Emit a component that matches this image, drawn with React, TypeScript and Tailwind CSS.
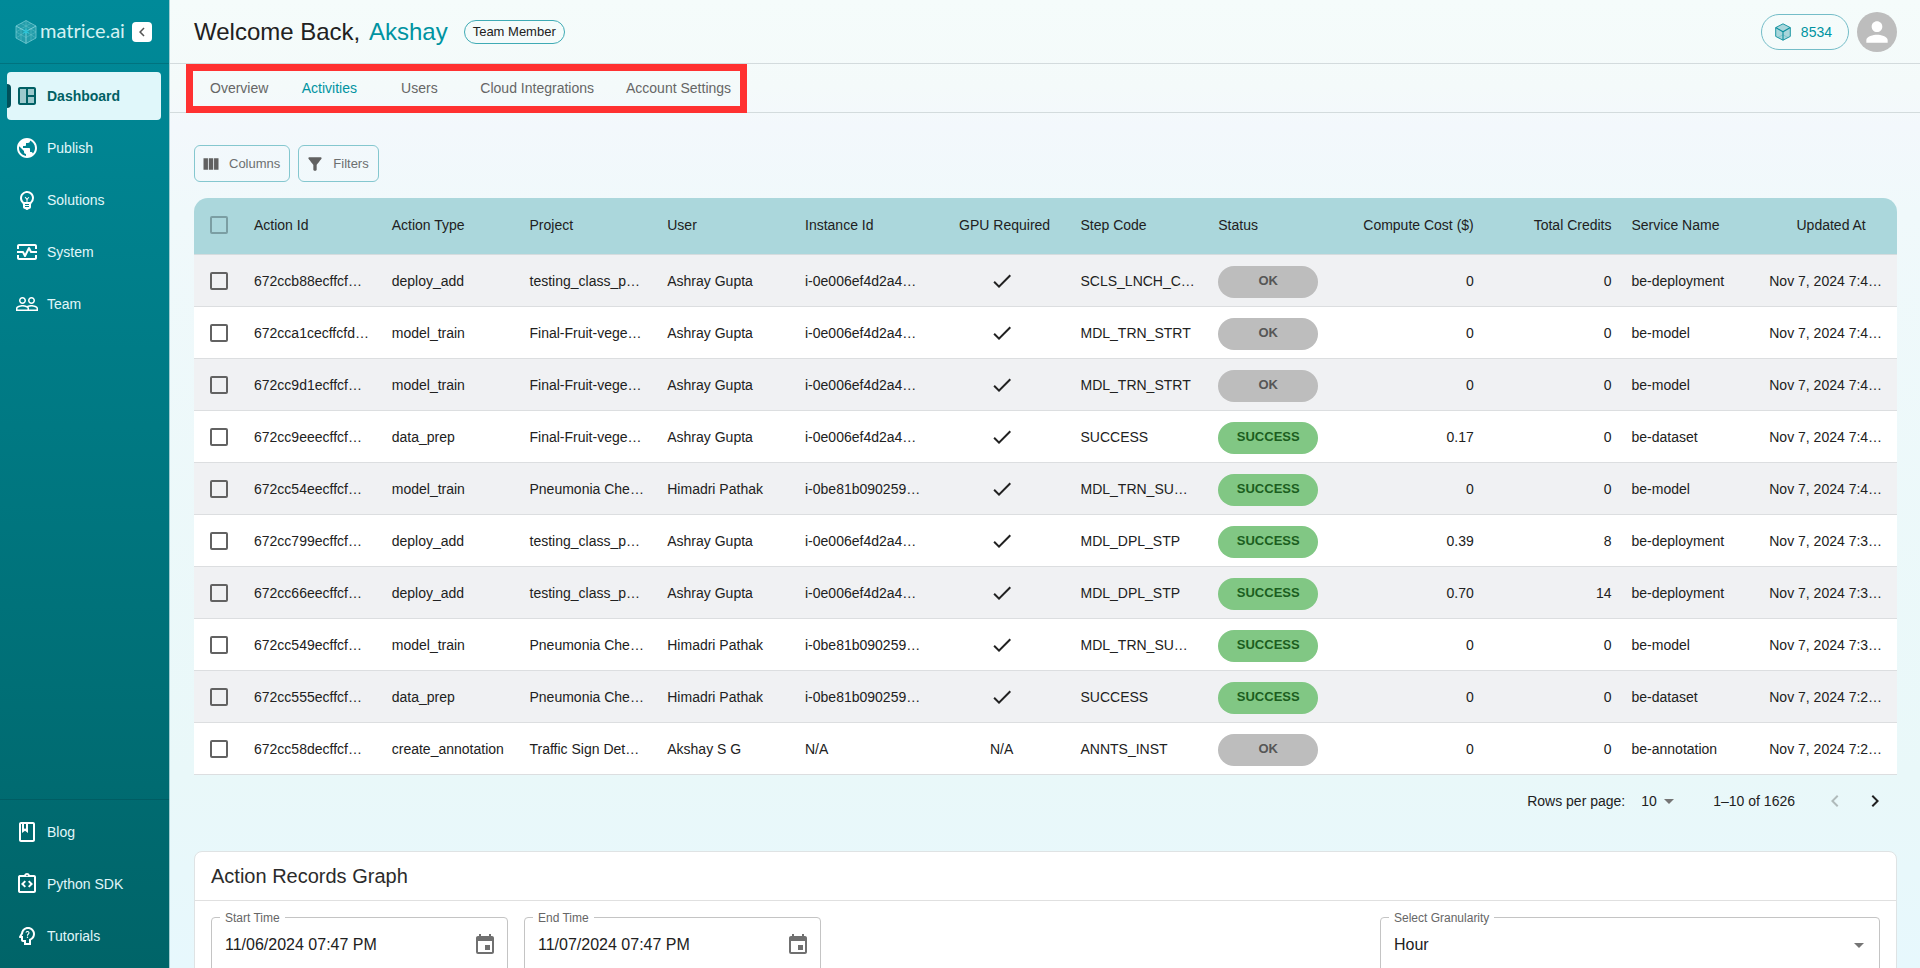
import React from 'react';
import {
  MdArrowDropDown,
  MdCheck,
  MdChevronLeft,
  MdChevronRight,
  MdEvent,
  MdFilterAlt,
  MdOutlineClass,
  MdOutlineEmojiObjects,
  MdOutlineIntegrationInstructions,
  MdOutlineMonitorHeart,
  MdOutlinePsychologyAlt,
  MdPeopleOutline,
  MdPerson,
  MdPublic,
  MdViewColumn,
} from 'react-icons/md';

type Status = 'OK' | 'SUCCESS';

interface ActionRecord {
  id: string;
  type: string;
  project: string;
  user: string;
  instance: string;
  gpu: boolean;
  step: string;
  status: Status;
  cost: string;
  credits: string;
  service: string;
  updated: string;
}

interface NavItem {
  label: string;
  icon: React.ReactNode;
  active?: boolean;
}

const records: ActionRecord[] = [
  { id: '672ccb88ecffcf…', type: 'deploy_add', project: 'testing_class_p…', user: 'Ashray Gupta', instance: 'i-0e006ef4d2a4…', gpu: true, step: 'SCLS_LNCH_C…', status: 'OK', cost: '0', credits: '0', service: 'be-deployment', updated: 'Nov 7, 2024 7:4…' },
  { id: '672cca1cecffcfd…', type: 'model_train', project: 'Final-Fruit-vege…', user: 'Ashray Gupta', instance: 'i-0e006ef4d2a4…', gpu: true, step: 'MDL_TRN_STRT', status: 'OK', cost: '0', credits: '0', service: 'be-model', updated: 'Nov 7, 2024 7:4…' },
  { id: '672cc9d1ecffcf…', type: 'model_train', project: 'Final-Fruit-vege…', user: 'Ashray Gupta', instance: 'i-0e006ef4d2a4…', gpu: true, step: 'MDL_TRN_STRT', status: 'OK', cost: '0', credits: '0', service: 'be-model', updated: 'Nov 7, 2024 7:4…' },
  { id: '672cc9eeecffcf…', type: 'data_prep', project: 'Final-Fruit-vege…', user: 'Ashray Gupta', instance: 'i-0e006ef4d2a4…', gpu: true, step: 'SUCCESS', status: 'SUCCESS', cost: '0.17', credits: '0', service: 'be-dataset', updated: 'Nov 7, 2024 7:4…' },
  { id: '672cc54eecffcf…', type: 'model_train', project: 'Pneumonia Che…', user: 'Himadri Pathak', instance: 'i-0be81b090259…', gpu: true, step: 'MDL_TRN_SU…', status: 'SUCCESS', cost: '0', credits: '0', service: 'be-model', updated: 'Nov 7, 2024 7:4…' },
  { id: '672cc799ecffcf…', type: 'deploy_add', project: 'testing_class_p…', user: 'Ashray Gupta', instance: 'i-0e006ef4d2a4…', gpu: true, step: 'MDL_DPL_STP', status: 'SUCCESS', cost: '0.39', credits: '8', service: 'be-deployment', updated: 'Nov 7, 2024 7:3…' },
  { id: '672cc66eecffcf…', type: 'deploy_add', project: 'testing_class_p…', user: 'Ashray Gupta', instance: 'i-0e006ef4d2a4…', gpu: true, step: 'MDL_DPL_STP', status: 'SUCCESS', cost: '0.70', credits: '14', service: 'be-deployment', updated: 'Nov 7, 2024 7:3…' },
  { id: '672cc549ecffcf…', type: 'model_train', project: 'Pneumonia Che…', user: 'Himadri Pathak', instance: 'i-0be81b090259…', gpu: true, step: 'MDL_TRN_SU…', status: 'SUCCESS', cost: '0', credits: '0', service: 'be-model', updated: 'Nov 7, 2024 7:3…' },
  { id: '672cc555ecffcf…', type: 'data_prep', project: 'Pneumonia Che…', user: 'Himadri Pathak', instance: 'i-0be81b090259…', gpu: true, step: 'SUCCESS', status: 'SUCCESS', cost: '0', credits: '0', service: 'be-dataset', updated: 'Nov 7, 2024 7:2…' },
  { id: '672cc58decffcf…', type: 'create_annotation', project: 'Traffic Sign Det…', user: 'Akshay S G', instance: 'N/A', gpu: false, step: 'ANNTS_INST', status: 'OK', cost: '0', credits: '0', service: 'be-annotation', updated: 'Nov 7, 2024 7:2…' },
];

const headers = [
  { label: 'Action Id', className: 'px-2.5 text-left' },
  { label: 'Action Type', className: 'px-2.5 text-left' },
  { label: 'Project', className: 'px-2.5 text-left' },
  { label: 'User', className: 'px-2.5 text-left' },
  { label: 'Instance Id', className: 'px-2.5 text-left' },
  { label: 'GPU Required', className: 'pl-4 pr-2.5 text-center' },
  { label: 'Step Code', className: 'px-2.5 text-left' },
  { label: 'Status', className: 'px-2.5 text-left' },
  { label: 'Compute Cost ($)', className: 'px-2.5 text-right' },
  { label: 'Total Credits', className: 'px-2.5 text-right' },
  { label: 'Service Name', className: 'px-2.5 text-left' },
  { label: 'Updated At', className: 'pl-4 pr-2.5 text-center' },
];

const tabs = ['Overview', 'Activities', 'Users', 'Cloud Integrations', 'Account Settings'];

const DashboardIcon = () => (
  <svg viewBox="0 0 24 24" className="h-6 w-6" fill="currentColor" aria-hidden="true">
    <path opacity=".3" d="M5 5h6v14H5zM13 5h6v6h-6zM13 13h6v6h-6z" />
    <path d="M19 3H5c-1.100 0-2 .9-2 2v14c0 1.100.9 2 2 2h14c1.100 0 2-.9 2-2V5c0-1.100-.9-2-2-2zM5 19V5h6v14H5zm14 0h-6v-6h6v6zm0-8h-6V5h6v6z" />
  </svg>
);

const LogoCube = () => (
  <svg viewBox="0 0 22 24" className="h-6 w-[22px] shrink-0" fill="none" stroke="#7fd0d8" aria-hidden="true">
    <path d="M11 0.500 21 6v12l-10 5.500L1 18V6z" fill="#4db6c2" fillOpacity=".45" strokeWidth=".7" />
    <path d="M1 6l10 5.500L21 6M11 11.500v12" strokeWidth=".9" />
    <path d="M11 .5v11M1 18l10-6.500L21 18M1 12l5-3M21 12l-5-3M6 3.300l10 5.500M16 3.300 6 8.800M6 8.800v12M16 8.800v12M1 12l10 5.500L21 12" strokeWidth=".5" opacity=".7" />
    <path d="M11 8.500v6M8 10l6 3.300M14 10l-6 3.300" stroke="#26c6da" strokeWidth="1" />
  </svg>
);

const CreditCube = () => (
  <svg viewBox="0 0 16 18" className="h-[18px] w-4" fill="#a9d6db" stroke="#0a8f9d" aria-hidden="true">
    <path d="M8 .8 15.300 4.600v8.800L8 17.200.7 13.400V4.600z" strokeWidth=".9" />
    <path d="M.7 4.600 8 8.800l7.300-4.200M8 8.800v8.400" fill="none" strokeWidth="1.100" />
    <path d="M3 14.500l5-2.700 5 2.700" fill="none" strokeWidth=".4" opacity=".6" />
  </svg>
);

const mainNav: NavItem[] = [
  { label: 'Dashboard', icon: <DashboardIcon />, active: true },
  { label: 'Publish', icon: <MdPublic className="h-6 w-6" /> },
  { label: 'Solutions', icon: <MdOutlineEmojiObjects className="h-6 w-6" /> },
  { label: 'System', icon: <MdOutlineMonitorHeart className="h-6 w-6" /> },
  { label: 'Team', icon: <MdPeopleOutline className="h-6 w-6" /> },
];

const helpNav: NavItem[] = [
  { label: 'Blog', icon: <MdOutlineClass className="h-6 w-6" /> },
  { label: 'Python SDK', icon: <MdOutlineIntegrationInstructions className="h-6 w-6" /> },
  { label: 'Tutorials', icon: <MdOutlinePsychologyAlt className="h-6 w-6" /> },
];

const NavList = ({ items }: { items: NavItem[] }) => (
  <ul className="flex flex-col gap-1 pl-[7px] pr-2 pt-2">
    {items.map((item) => (
      <li key={item.label}>
        <a
          href="#"
          className={
            item.active
              ? 'relative flex h-12 items-center gap-2 rounded bg-[#e0f7fa] pl-2 text-sm font-bold text-[#006064]'
              : 'flex h-12 items-center gap-2 rounded pl-2 text-sm text-[#e0f7fa]'
          }
        >
          {item.active && <span className="absolute left-0 top-3 h-6 w-1 rounded-r bg-[#00505a]" />}
          <span className={item.active ? '' : 'text-white'}>{item.icon}</span>
          {item.label}
        </a>
      </li>
    ))}
  </ul>
);

const Sidebar = () => (
  <aside className="flex w-[170px] shrink-0 flex-col border-r border-[#a3cdd1] bg-linear-to-b from-[#008a99] to-[#006468] bg-clip-padding">
    <div className="flex h-16 shrink-0 items-center border-b border-[#00737f] pl-[15px]">
      <LogoCube />
      <span className="ml-[3px] w-[88px] pb-1 font-['Lato',sans-serif] text-xl leading-6 text-[#d5f1f3]">matrice.ai</span>
      <button
        type="button"
        aria-label="Collapse menu"
        className="ml-1 flex h-5 w-5 items-center justify-center rounded bg-white text-[#555]"
      >
        <MdChevronLeft className="h-[18px] w-[18px]" />
      </button>
    </div>
    <nav aria-label="Main" className="flex-1">
      <NavList items={mainNav} />
    </nav>
    <nav aria-label="Help" className="border-t border-[#005d63] pb-2">
      <NavList items={helpNav} />
    </nav>
  </aside>
);

const Header = () => (
  <header className="flex h-16 shrink-0 items-center border-b border-[#d3dbdd] pl-6 pr-[23px]">
    <h1 className="text-2xl text-[#212121]">
      Welcome Back, <span className="ml-0.5 text-[#0093a1]">Akshay</span>
    </h1>
    <span className="ml-4 flex h-6 items-center rounded-full border border-[#3fabb5] px-2 text-[13px] text-[#212121]">
      Team Member
    </span>
    <div className="ml-auto flex items-center gap-2">
      <button
        type="button"
        className="flex h-9 items-center gap-2.5 rounded-full border border-[#74bdc8] pl-[13px] pr-4 text-sm text-[#0093a1]"
      >
        <CreditCube />
        8534
      </button>
      <button
        type="button"
        aria-label="Account"
        className="flex h-10 w-10 items-center justify-center rounded-full bg-[#bdbdbd] text-white"
      >
        <MdPerson className="h-8 w-8" />
      </button>
    </div>
  </header>
);

const TabBar = () => (
  <div className="border-b border-[#d3dbdd] px-6">
    <div className="relative w-fit">
      <div role="tablist" className="flex">
        {tabs.map((tab) => (
          <button
            key={tab}
            type="button"
            role="tab"
            aria-selected={tab === 'Activities'}
            className={
              tab === 'Activities'
                ? 'h-12 min-w-[90px] px-4 text-sm whitespace-nowrap text-[#0093a1]'
                : 'h-12 min-w-[90px] px-4 text-sm whitespace-nowrap text-[#666]'
            }
          >
            {tab}
          </button>
        ))}
      </div>
      {/* Highlight frame around the tabs */}
      <div className="pointer-events-none absolute -bottom-px -left-2 right-0 top-0 border-[7px] border-[#ff3131]" />
    </div>
  </div>
);

const StatusPill = ({ status }: { status: Status }) => (
  <span
    className={
      status === 'OK'
        ? 'mt-0.5 flex h-8 w-[100px] items-center justify-center rounded-full bg-[#bdbdbd] text-[13px] font-bold text-[#565656]'
        : 'mt-0.5 flex h-8 w-[100px] items-center justify-center rounded-full bg-[#81c784] text-[13px] font-bold text-[#1b5e20]'
    }
  >
    {status}
  </span>
);

const RecordsTable = () => (
  <div className="overflow-hidden rounded-t-[14px]">
    <table className="w-full table-fixed border-separate border-spacing-0 text-sm whitespace-nowrap text-[#212121]">
      <thead>
        <tr className="h-[57px] bg-[#abd7dc]">
          <th className="w-[50px] border-b border-[#d5dcde] px-0 pb-0.5 pt-0">
            <input
              type="checkbox"
              aria-label="Select all rows"
              className="mx-auto block h-[18px] w-[18px] appearance-none rounded-[2px] border-2 border-[#7b9ea3]"
            />
          </th>
          {headers.map((header) => (
            <th key={header.label} className={`border-b border-[#d5dcde] pb-0.5 pt-0 font-normal ${header.className}`}>
              {header.label}
            </th>
          ))}
        </tr>
      </thead>
      <tbody className="[&_td]:border-b [&_td]:border-[#dcdee0] [&_td]:px-2.5 [&_td]:py-0">
        {records.map((row) => (
          <tr key={row.id} className="h-13 odd:bg-[#f0f1f3] even:bg-white">
            <td>
              <input
                type="checkbox"
                aria-label={`Select ${row.id}`}
                className="mx-auto block h-[18px] w-[18px] appearance-none rounded-[2px] border-2 border-[#626262]"
              />
            </td>
            <td>{row.id}</td>
            <td>{row.type}</td>
            <td>{row.project}</td>
            <td>{row.user}</td>
            <td>{row.instance}</td>
            <td className="text-center">
              {row.gpu ? <MdCheck className="mx-auto h-6 w-6" aria-label="Yes" /> : 'N/A'}
            </td>
            <td>{row.step}</td>
            <td>
              <StatusPill status={row.status} />
            </td>
            <td className="text-right">{row.cost}</td>
            <td className="text-right">{row.credits}</td>
            <td>{row.service}</td>
            <td>{row.updated}</td>
          </tr>
        ))}
      </tbody>
    </table>
  </div>
);

const Pagination = () => (
  <div className="flex h-13 items-center justify-end pr-2.5 text-sm text-[#212121]">
    <label htmlFor="rows-per-page">Rows per page:</label>
    <div className="relative ml-4 mr-8 flex items-center">
      <select id="rows-per-page" defaultValue="10" className="w-10 appearance-none bg-transparent">
        <option>10</option>
        <option>25</option>
        <option>50</option>
      </select>
      <MdArrowDropDown className="pointer-events-none absolute right-0 h-6 w-6 text-[#757575]" />
    </div>
    <span>1–10 of 1626</span>
    <div className="ml-7 flex gap-4">
      <button type="button" aria-label="Previous page" disabled className="text-[#b0bbbb]">
        <MdChevronLeft className="h-6 w-6" />
      </button>
      <button type="button" aria-label="Next page">
        <MdChevronRight className="h-6 w-6" />
      </button>
    </div>
  </div>
);

interface FieldProps {
  id: string;
  label: string;
  className?: string;
  children: React.ReactNode;
}

const Field = ({ id, label, className = '', children }: FieldProps) => (
  <div className={`relative flex h-14 items-center rounded border border-[#c4c4c4] text-base text-[#212121] ${className}`}>
    <label htmlFor={id} className="absolute -top-2 left-2 bg-white px-[5px] text-xs text-[#666]">
      {label}
    </label>
    {children}
  </div>
);

const DateField = ({ id, label, value }: { id: string; label: string; value: string }) => (
  <Field id={id} label={label} className="w-[297px]">
    <input id={id} type="text" defaultValue={value} className="min-w-0 flex-1 bg-transparent pl-[13px] outline-none" />
    <button type="button" aria-label={`Choose ${label}`} className="mr-2.5 text-[#707070]">
      <MdEvent className="h-6 w-6" />
    </button>
  </Field>
);

const GraphCard = () => (
  <section className="mt-6 rounded-lg border border-[#dfe3e4] bg-white">
    <h2 className="border-b border-[#e0e0e0] px-4 py-2.5 text-xl text-[#2b2b2b]">Action Records Graph</h2>
    <div className="flex gap-4 p-4">
      <DateField id="start-time" label="Start Time" value="11/06/2024 07:47 PM" />
      <DateField id="end-time" label="End Time" value="11/07/2024 07:47 PM" />
      <Field id="granularity" label="Select Granularity" className="ml-auto w-[500px]">
        <select id="granularity" defaultValue="Hour" className="h-full w-full appearance-none bg-transparent pl-[13px] outline-none">
          <option>Hour</option>
          <option>Day</option>
          <option>Week</option>
        </select>
        <MdArrowDropDown className="pointer-events-none absolute right-2 h-6 w-6 text-[#757575]" />
      </Field>
    </div>
  </section>
);

export default function App() {
  return (
    <div className="flex h-screen overflow-hidden font-['Liberation_Sans',Arial,sans-serif]">
      <Sidebar />
      <div className="flex min-w-0 flex-1 flex-col bg-[linear-gradient(180deg,#f5fcfb_0%,#f4fafa_9%,#f3f8fc_13%,#f0f9fb_22%,#e9f8f9_80%,#e7f8fd_100%)]">
        <Header />
        <main className="min-h-0 flex-1 overflow-y-auto [scrollbar-width:none]">
          <TabBar />
          <div className="pb-6 pl-6 pr-[23px] pt-8">
            <div className="mb-4 flex gap-2">
              <button
                type="button"
                className="flex h-[37px] items-center gap-2 rounded-md border border-[#84c7cf] pl-1.5 pr-[9px] text-[13px] text-[#6c6f70]"
              >
                <MdViewColumn className="h-5 w-5 text-[#616161]" />
                Columns
              </button>
              <button
                type="button"
                className="flex h-[37px] items-center gap-2 rounded-md border border-[#84c7cf] pl-1.5 pr-[9px] text-[13px] text-[#6c6f70]"
              >
                <MdFilterAlt className="h-5 w-5 text-[#616161]" />
                Filters
              </button>
            </div>
            <RecordsTable />
            <Pagination />
            <GraphCard />
          </div>
        </main>
      </div>
    </div>
  );
}
